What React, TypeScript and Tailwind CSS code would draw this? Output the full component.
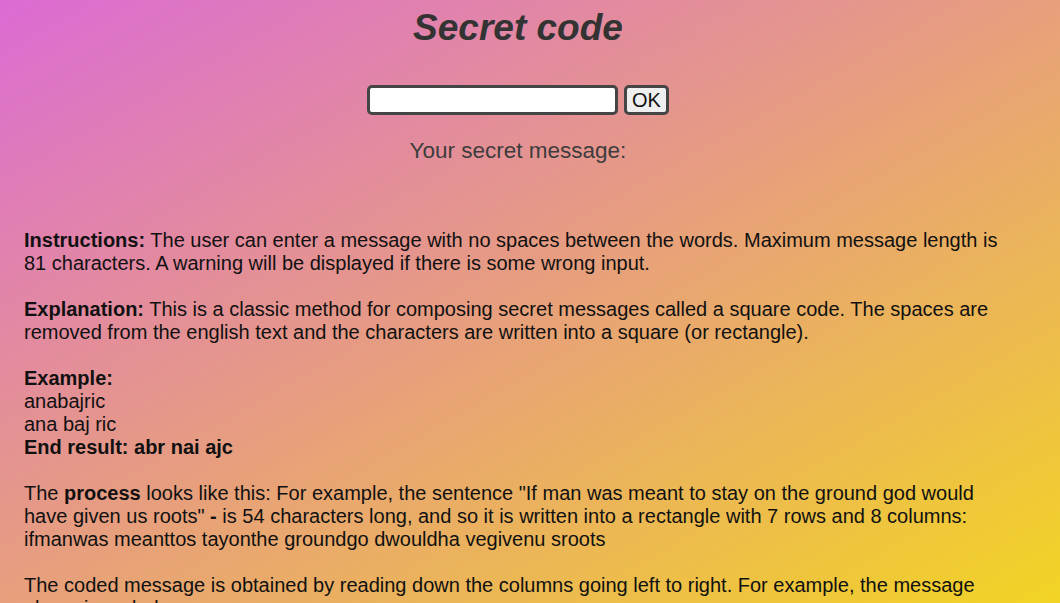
import { useState } from "react";

export default function App() {
  const [message, setMessage] = useState("");

  return (
    <div className="h-screen overflow-hidden bg-linear-to-br/srgb from-[#dc6bd4] to-[#f2d424] font-['Liberation_Sans',Arial,sans-serif]">
      <div className="pr-6">
        <h1 className="pt-[7px] text-center text-[37px] leading-[42px] font-bold italic text-[#333333]">
          Secret code
        </h1>

        <div className="mt-[36px] flex justify-center gap-[6px]">
          <input
            type="text"
            value={message}
            onChange={(e) => setMessage(e.target.value)}
            className="h-[30px] w-[251px] rounded-[5px] border-[3px] border-[#454545] bg-white px-1 text-[18px] text-black outline-none"
          />
          <button className="h-[30px] w-[45px] rounded-[5px] border-[3px] border-[#454545] bg-[#efefef] text-[20px] leading-none text-[#111111]">
            OK
          </button>
        </div>

        <p className="mt-[23px] text-center text-[22.5px] leading-[26px] text-[#3d3d3d]">
          Your secret message:
        </p>
      </div>

      <div className="mt-[65px] flex flex-col gap-[23px] pl-6 pr-12 text-[20px] leading-[23px] text-[#111111]">
        <p>
          <b>Instructions:</b> The user can enter a message with no spaces
          between the words. Maximum message length is 81 characters. A warning
          will be displayed if there is some wrong input.
        </p>
        <p>
          <b>Explanation:</b> This is a classic method for composing secret
          messages called a square code. The spaces are removed from the english
          text and the characters are written into a square (or rectangle).
        </p>
        <p>
          <b>Example:</b>
          <br />
          anabajric
          <br />
          ana baj ric
          <br />
          <b>End result: abr nai ajc</b>
        </p>
        <p>
          The <b>process</b> looks like this: For example, the sentence "If man
          was meant to stay on the ground god would have given us roots"{" "}
          <b>-</b> is 54 characters long, and so it is written into a rectangle
          with 7 rows and 8 columns:
          <br />
          ifmanwas meanttos tayonthe groundgo dwouldha vegivenu sroots
        </p>
        <p>
          The coded message is obtained by reading down the columns going left
          to right. For example, the message above is coded as:
          <br />
          imtgdvs fearwer mayoogo anouuio ntnnlvt wttddes aohghn sseoau
        </p>
      </div>
    </div>
  );
}
